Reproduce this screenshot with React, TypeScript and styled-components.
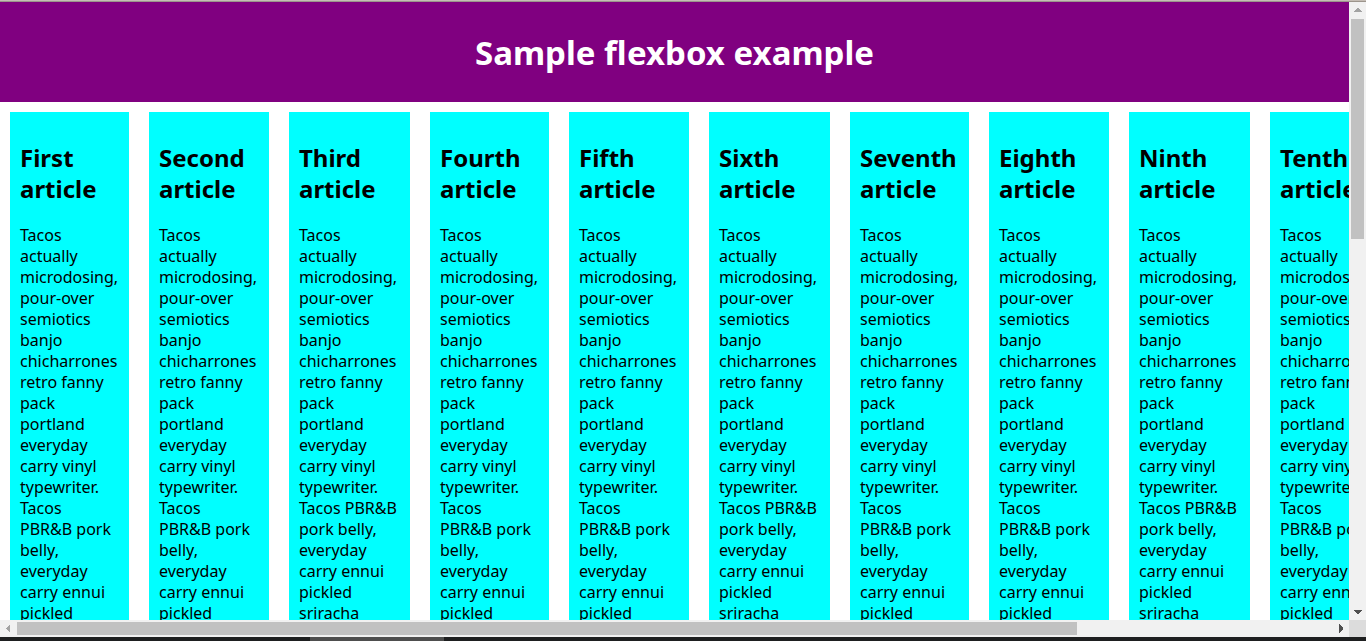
import React from "react";
import styled, { createGlobalStyle } from "styled-components";

const GlobalStyle = createGlobalStyle`
  * { box-sizing: border-box; }
  body {
    margin: 0;
    overflow: hidden;
    font-family: "Noto Sans", "Open Sans", sans-serif;
    font-size: 16px;
    line-height: 21px;
    color: #000;
  }
`;

const Window = styled.div`
  display: grid;
  grid-template-rows: 2px minmax(0, 1fr) 17px 4px;
  grid-template-columns: minmax(0, 1fr) 17px;
  height: 100vh;
  background: #fff;
`;

const TopEdge = styled.div`
  grid-column: 1 / -1;
  background: #c5bdb5;
  border-bottom: 1px solid #9c958c;
`;

const BottomEdge = styled.div`
  grid-column: 1 / -1;
  display: flex;
  background: #1e1f20;
`;

const EdgeSpace = styled.div`
  flex: 310;
`;

const EdgeHighlight = styled.div`
  flex: 134;
  background: #4e4e4e;
`;

const EdgeRest = styled.div`
  flex: 922;
`;

const Page = styled.div`
  overflow: hidden;
`;

const Header = styled.header`
  display: flex;
  justify-content: center;
  align-items: center;
  height: 100px;
  padding-top: 2px;
  background: purple;
`;

const Title = styled.h1`
  margin: 0;
  color: #fff;
  font-size: 33px;
  line-height: 44px;
  font-weight: 700;
  white-space: nowrap;
`;

const Articles = styled.section`
  display: flex;
`;

const Article = styled.article`
  flex: none;
  width: 120px;
  margin: 10px;
  padding: 10px;
  background: aqua;

  &:nth-child(3n + 1) {
    width: 119px;
  }
  &:nth-child(3n) {
    width: 121px;
  }
`;

const Heading = styled.h2`
  margin: 20px 0 21px;
  font-size: 24px;
  line-height: 31px;
  font-weight: 700;
`;

const Text = styled.p`
  margin: 0;
  font-size: 16px;
  white-space: pre;
`;

const Scrollbar = styled.div<{ $vertical?: boolean }>`
  display: flex;
  flex-direction: ${(p) => (p.$vertical ? "column" : "row")};
  background: #f1f1f1;
`;

const Arrow = styled.button`
  flex: none;
  display: block;
  width: 17px;
  height: 17px;
  padding: 0;
  border: 0;
  background: none;
  svg {
    display: block;
  }
`;

const Track = styled.div<{ $vertical?: boolean }>`
  flex: 1;
  display: flex;
  flex-direction: ${(p) => (p.$vertical ? "column" : "row")};
  padding: ${(p) => (p.$vertical ? "0 2px" : "2px 0")};
`;

const Thumb = styled.div<{ $share: number }>`
  flex: 0 0 ${(p) => p.$share}%;
  background: #c1c1c1;
`;

const Corner = styled.div`
  background: #dcdcdc;
`;

const names = ["First", "Second", "Third", "Fourth", "Fifth", "Sixth", "Seventh", "Eighth", "Ninth", "Tenth"];

const opening = [
  "Tacos", "actually", "microdosing,", "pour-over", "semiotics", "banjo", "chicharrones",
  "retro fanny", "pack", "portland", "everyday", "carry vinyl", "typewriter.",
];
const narrowEnd = ["Tacos", "PBR&B pork", "belly,", "everyday", "carry ennui", "pickled"];
const wideEnd = ["Tacos PBR&B", "pork belly,", "everyday", "carry ennui", "pickled", "sriracha"];

const arrows = {
  up: { points: "8,6 4,10 13,10 9,6", color: "#a3a3a3" },
  down: { points: "4,7 13,7 9,11 8,11", color: "#505050" },
  left: { points: "10,4 10,13 6,9 6,8", color: "#a3a3a3" },
  right: { points: "7,4 7,13 11,9 11,8", color: "#505050" },
};

function ScrollArrow({ to }: { to: keyof typeof arrows }) {
  return (
    <Arrow type="button" aria-label={`Scroll ${to}`}>
      <svg width="17" height="17" viewBox="0 0 17 17" shapeRendering="crispEdges">
        <polygon points={arrows[to].points} fill={arrows[to].color} />
      </svg>
    </Arrow>
  );
}

export default function App() {
  return (
    <>
      <GlobalStyle />
      <Window>
        <TopEdge />
        <Page>
          <Header>
            <Title>Sample flexbox example</Title>
          </Header>
          <Articles>
            {names.map((name, i) => (
              <Article key={name}>
                <Heading>
                  {name}
                  <br />
                  article
                </Heading>
                <Text>{[...opening, ...(i % 3 === 2 ? wideEnd : narrowEnd)].join("\n")}</Text>
              </Article>
            ))}
          </Articles>
        </Page>
        <Scrollbar $vertical>
          <ScrollArrow to="up" />
          <Track $vertical>
            <Thumb $share={37.7} />
          </Track>
          <ScrollArrow to="down" />
        </Scrollbar>
        <Scrollbar>
          <ScrollArrow to="left" />
          <Track>
            <Thumb $share={80.6} />
          </Track>
          <ScrollArrow to="right" />
        </Scrollbar>
        <Corner />
        <BottomEdge>
          <EdgeSpace />
          <EdgeHighlight />
          <EdgeRest />
        </BottomEdge>
      </Window>
    </>
  );
}
